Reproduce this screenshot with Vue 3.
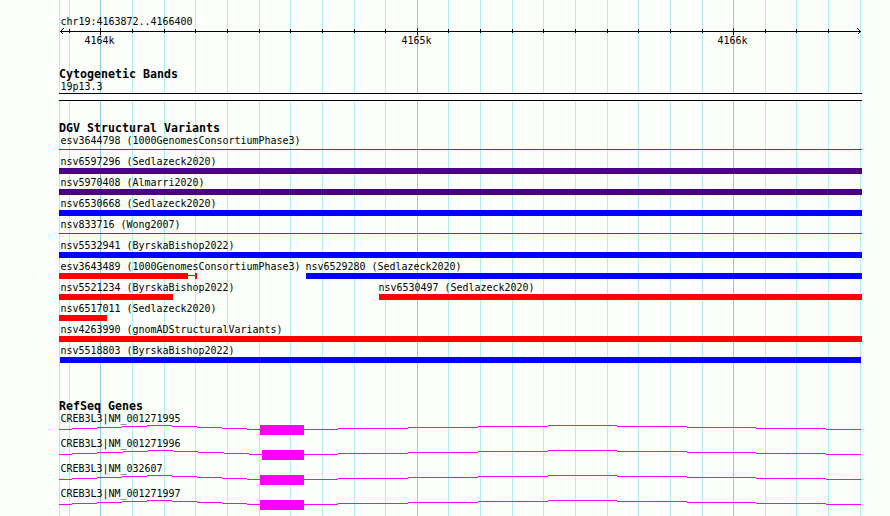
<script setup>
const grid = [59, 69, 100, 132, 164, 195, 227, 259, 290, 322, 354, 385, 417, 448, 480, 512, 543, 575, 607, 638, 670, 702, 733, 765, 796, 828, 860]
const majors = [
  { x: 100, label: '4164k' },
  { x: 417, label: '4165k' },
  { x: 733, label: '4166k' },
]
const isMajor = (x) => majors.some((m) => m.x === x)
const ticks = grid.slice(1, -1)

// Labels are set at 10px and stretched vertically to get tall, narrow glyphs
const place = (x, y) => `translate(${x + 0.5} ${y}) scale(1 1.1)`

const red = '#ff0000'
const blue = '#0000ff'
const indigo = '#4b0082'
const item = (name, color, x = 59, end = 862, extra = {}) => ({ name, color, x, end, h: 6, tx: 60, ...extra })
const variants = [
  [item('esv3644798 (1000GenomesConsortiumPhase3)', red, 59, 862, { h: 1 })],
  [item('nsv6597296 (Sedlazeck2020)', indigo)],
  [item('nsv5970408 (Almarri2020)', indigo)],
  [item('nsv6530668 (Sedlazeck2020)', blue)],
  [item('nsv833716 (Wong2007)', red, 59, 862, { h: 1 })],
  [item('nsv5532941 (ByrskaBishop2022)', blue)],
  [
    item('esv3643489 (1000GenomesConsortiumPhase3)', red, 59, 188, { tail: 197 }),
    item('nsv6529280 (Sedlazeck2020)', blue, 306, 862, { tx: 305 }),
  ],
  [
    item('nsv5521234 (ByrskaBishop2022)', red, 59, 173),
    item('nsv6530497 (Sedlazeck2020)', red, 379, 862, { tx: 378 }),
  ],
  [item('nsv6517011 (Sedlazeck2020)', red, 59, 107)],
  [item('nsv4263990 (gnomADStructuralVariants)', red)],
  [item('nsv5518803 (ByrskaBishop2022)', blue, 60, 861)],
]

// Each intron is a stepped arc: [start, end, rise above the baseline]
const rightArc = [
  [304, 338, 0], [338, 408, 1], [408, 478, 2], [478, 548, 3], [548, 617, 4],
  [617, 687, 3], [687, 756, 2], [756, 826, 1], [826, 861, 0],
]
const arcA = [
  [59, 72, 0], [72, 97, 1], [97, 122, 2], [122, 147, 3], [147, 172, 4],
  [172, 197, 3], [197, 222, 2], [222, 247, 1], [247, 260, 0],
]
const arcB = [
  [59, 72, 0], [72, 97, 1], [97, 123, 2], [123, 148, 3], [148, 173, 4],
  [173, 198, 3], [198, 224, 2], [224, 249, 1], [249, 262, 0],
]
const genes = [
  { name: 'CREB3L3|NM_001271995', exon: 260, steps: [...arcA, ...rightArc] },
  { name: 'CREB3L3|NM_001271996', exon: 262, steps: [...arcB, ...rightArc] },
  { name: 'CREB3L3|NM_032607', exon: 260, steps: [...arcA, ...rightArc] },
  { name: 'CREB3L3|NM_001271997', exon: 260, steps: [...arcA, ...rightArc] },
]
</script>

<template>
  <main class="browser">
    <svg class="grid" width="890" height="516">
      <rect v-for="x in grid" :key="x" :x="x" y="0" width="1" height="516" :class="isMajor(x) ? 'major' : 'minor'" />
    </svg>

    <div class="tracks">
      <svg class="ruler" width="890" height="66">
        <text class="label" :transform="place(60, 25)" textLength="132" lengthAdjust="spacingAndGlyphs">chr19:4163872..4166400</text>
        <rect x="60" y="31" width="801" height="1" />
        <rect v-for="x in ticks" :key="x" :x="x" :y="isMajor(x) ? 28 : 29" width="1" :height="isMajor(x) ? 7 : 4" />
        <path class="arrow" d="M63.5 28.5L60.5 31.5L63.5 34.5M857.5 28.5L860.5 31.5L857.5 34.5" />
        <text v-for="m in majors" :key="m.x" class="label" :transform="place(m.x - 16, 44)" textLength="30" lengthAdjust="spacingAndGlyphs">{{ m.label }}</text>
      </svg>

      <svg class="bands" width="890" height="54">
        <text class="title" x="59" y="12" textLength="119" lengthAdjust="spacingAndGlyphs">Cytogenetic Bands</text>
        <text class="label" :transform="place(60, 24)" textLength="42" lengthAdjust="spacingAndGlyphs">19p13.3</text>
        <rect x="59" y="27" width="803" height="8" />
        <rect class="band" x="59" y="28" width="803" height="6" />
      </svg>

      <svg class="heading" width="890" height="14">
        <text class="title" x="59" y="12" textLength="161" lengthAdjust="spacingAndGlyphs">DGV Structural Variants</text>
      </svg>
      <svg v-for="(row, i) in variants" :key="i" class="variant" width="890" height="21">
        <g v-for="v in row" :key="v.name">
          <text class="label" :transform="place(v.tx, 10)" :textLength="v.name.length * 6" lengthAdjust="spacingAndGlyphs">{{ v.name }}</text>
          <rect :x="v.x" :y="v.h === 1 ? 15 : 13" :width="v.end - v.x" :height="v.h" :fill="v.color" />
          <template v-if="v.tail">
            <rect :x="v.end" y="15" :width="v.tail - v.end" height="1" :fill="v.color" />
            <rect :x="v.tail - 2" y="13" width="2" height="6" :fill="v.color" />
          </template>
        </g>
      </svg>

      <svg class="heading genes" width="890" height="14">
        <text class="title" x="59" y="12" textLength="84" lengthAdjust="spacingAndGlyphs">RefSeq Genes</text>
      </svg>
      <svg v-for="g in genes" :key="g.name" class="gene" width="890" height="25">
        <text class="label" :transform="place(60, 10)" :textLength="g.name.length * 6" lengthAdjust="spacingAndGlyphs">{{ g.name }}</text>
        <rect v-for="s in g.steps" :key="s[0]" :x="s[0]" :y="17 - s[2]" :width="s[1] - s[0]" height="1" />
        <rect :x="g.exon" y="13" :width="304 - g.exon" height="10" />
      </svg>
    </div>
  </main>
</template>

<style>
body {
  background: #fdfffc;
  overflow: hidden;
}
</style>

<style scoped>
.browser {
  position: relative;
  width: 890px;
  height: 516px;
  overflow: hidden;
  background: #fdfffc;
}
.grid {
  position: absolute;
  inset: 0;
}
.tracks {
  position: relative;
  display: flex;
  flex-direction: column;
}
svg {
  display: block;
  flex: none;
  overflow: visible;
  shape-rendering: crispEdges;
}
.minor {
  fill: #afeeee;
}
.major {
  fill: #87ceeb;
}
.label {
  font: 10px "DejaVu Sans Mono", monospace;
  fill: #000;
}
.title {
  font: bold 11.6px "DejaVu Sans Mono", monospace;
  fill: #000;
}
.arrow {
  fill: none;
  stroke: #000;
}
.band {
  fill: #fff;
}
.heading.genes {
  margin-top: 33px;
}
.gene {
  fill: #ff00ff;
}
</style>
